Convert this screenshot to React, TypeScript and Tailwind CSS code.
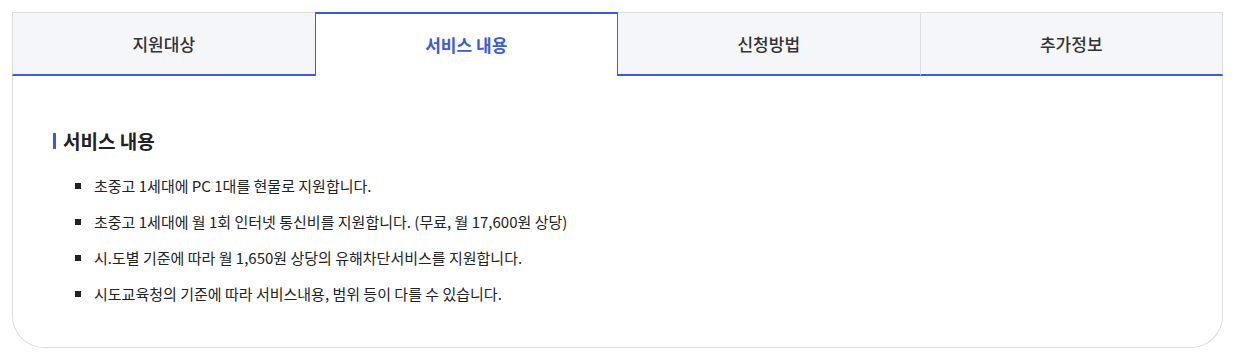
import React from "react";

const tabs = ["지원대상", "서비스 내용", "신청방법", "추가정보"];
const items = [
  "초중고 1세대에 PC 1대를 현물로 지원합니다.",
  "초중고 1세대에 월 1회 인터넷 통신비를 지원합니다. (무료, 월 17,600원 상당)",
  "시.도별 기준에 따라 월 1,650원 상당의 유해차단서비스를 지원합니다.",
  "시도교육청의 기준에 따라 서비스내용, 범위 등이 다를 수 있습니다.",
];

export default function App() {
  return (
    <div
      className="bg-white w-[1235px] h-[357px] pt-[12px] px-[12px]"
      style={{ fontFamily: '"Noto Sans CJK KR", "Noto Sans", sans-serif' }}
    >
      <div className="w-[1211px]">
        <div className="flex h-[64px]">
          {tabs.map((t, i) =>
            i === 1 ? (
              <div
                key={t}
                className="flex-1 flex items-center justify-center bg-white border-t-2 border-x border-[#3b5bdb] text-[#3b5bdb] text-[17px] font-bold"
              >
                {t}
              </div>
            ) : (
              <div
                key={t}
                className={`flex-1 flex items-center justify-center bg-[#f5f6fa] border-t border-[#dddddd] border-b-2 border-b-[#3b5bdb] text-[#333] text-[17px] font-medium ${
                  i === 0 ? "border-l" : i === 3 ? "border-r border-l" : ""
                }`}
              >
                {t}
              </div>
            )
          )}
        </div>
        <div className="border-x border-b border-[#dddddd] rounded-b-[32px] h-[272px] pt-[52px] pl-[40px]">
          <div className="flex items-center gap-[7px]">
            <span className="w-[3px] h-[16px] bg-[#3b5bdb]" />
            <h2 className="text-[19px] font-bold text-[#222] leading-[26px]">서비스 내용</h2>
          </div>
          <ul className="mt-[20px] pl-[22px] flex flex-col gap-[12px]">
            {items.map((s) => (
              <li key={s} className="flex items-center gap-[13px] text-[15px] text-[#222] leading-[24px]">
                <span className="w-[6px] h-[6px] bg-[#222] shrink-0" />
                {s}
              </li>
            ))}
          </ul>
        </div>
      </div>
    </div>
  );
}
